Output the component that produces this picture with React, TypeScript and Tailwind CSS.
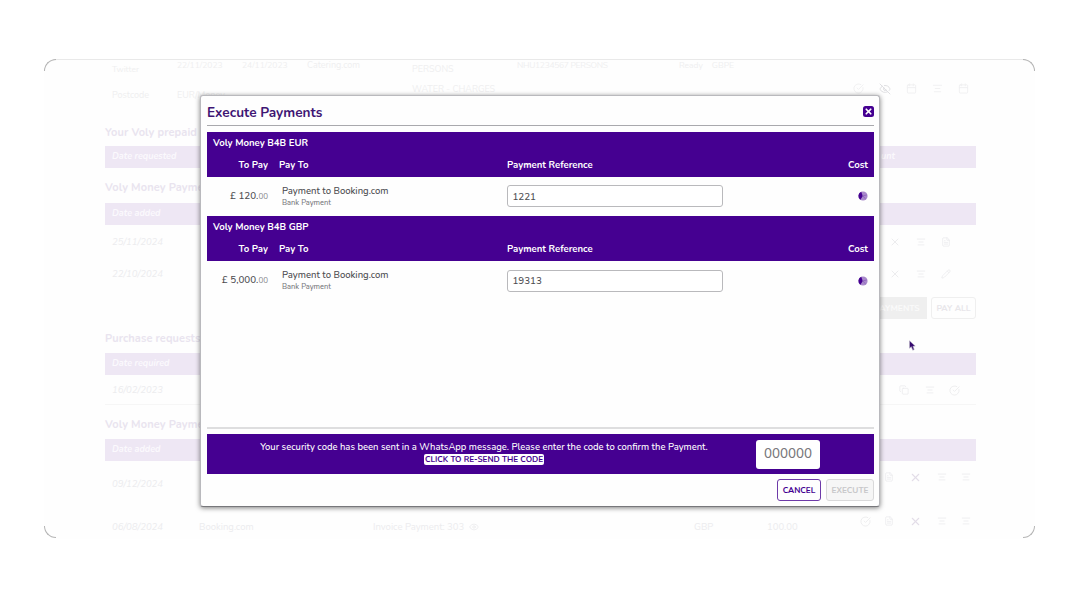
import type { ReactNode } from "react";
import { AlignCenter, Calendar, CheckCircle, Copy, Eye, EyeOff, FileText, Pencil, X } from "lucide-react";

interface Payment {
  account: string;
  whole: string;
  cents: string;
  payee: string;
  method: string;
  reference: string;
}

const payments: Payment[] = [
  {
    account: "Voly Money B4B EUR",
    whole: "£ 120.",
    cents: "00",
    payee: "Payment to Booking.com",
    method: "Bank Payment",
    reference: "1221",
  },
  {
    account: "Voly Money B4B GBP",
    whole: "£ 5,000.",
    cents: "00",
    payee: "Payment to Booking.com",
    method: "Bank Payment",
    reference: "19313",
  },
];

// ─── Page behind the dialog ───────────────────────────────────────────────────
const PageHeading = ({ children }: { children: ReactNode }) => (
  <h2 className="h-[14px] whitespace-nowrap text-[11px] font-bold leading-[14px] tracking-[0.1px] text-[#e9e4ef]">{children}</h2>
);

const PageBar = ({ label, end }: { label: string; end?: string }) => (
  <div className="flex h-[22px] items-center justify-between bg-[#eee7f4] pl-[7px] text-[9px] font-bold italic text-[#fbf9fd]">
    <span>{label}</span>
    {end && <span className="mr-[81px]">{end}</span>}
  </div>
);

const PageRow = ({ date, children }: { date: string; children?: ReactNode }) => (
  <div className="flex h-[14px] items-center justify-between pl-[7px] text-[9.5px] italic text-[#ececee]">
    <span>{date}</span>
    <div className="flex items-center">{children}</div>
  </div>
);

const BackgroundPage = () => (
  <div className="ml-[61px] w-[871px] text-[#efeff0]">
    <div className="flex h-[23px] text-[8.5px] leading-[10px]">
      <span className="w-[72px] pl-[7px] pt-[4px]">Twitter</span>
      <span className="w-[65px]">22/11/2023</span>
      <span className="w-[65px]">24/11/2023</span>
      <span className="w-[105px] text-[9px]">Catering.com</span>
      <span className="w-[105px] pt-[4px] text-[9px]">PERSONS</span>
      <span className="w-[162px] tracking-[-0.3px]">NHU1234567 PERSONS</span>
      <span>Ready &nbsp; &nbsp;GBPE</span>
    </div>
    <div className="flex h-[42.5px] justify-between text-[9px] leading-[12px]">
      <div className="flex">
        <span className="w-[72px] pl-[7px] pt-[6px]">Postcode</span>
        <span className="w-[235px] pt-[6px]">EUR/Money</span>
        <span>WATER - CHARGES</span>
      </div>
      <div className="mr-[7px] flex gap-[15px] text-[#f0f0f1]">
        <CheckCircle size={11} />
        <EyeOff size={12} className="text-[#dfdfe2]" />
        <Calendar size={11} />
        <AlignCenter size={11} />
        <Calendar size={11} />
      </div>
    </div>
    <PageHeading>Your Voly prepaid cards</PageHeading>
    <div className="h-[6.5px]" />
    <PageBar label="Date requested" end="unt" />
    <div className="h-[13px]" />
    <PageHeading>Voly Money Payments</PageHeading>
    <div className="h-[8px]" />
    <PageBar label="Date added" />
    <div className="h-[10px]" />
    <PageRow date="25/11/2024">
      <X size={12} className="mr-[15px]" />
      <AlignCenter size={10} className="mr-[15px]" />
      <FileText size={10} className="mr-[25px]" />
    </PageRow>
    <div className="h-[18px]" />
    <PageRow date="22/10/2024">
      <X size={12} className="mr-[15px]" />
      <AlignCenter size={10} className="mr-[15px]" />
      <Pencil size={10} className="mr-[25px]" />
    </PageRow>
    <div className="h-[16px]" />
    <div className="flex justify-end gap-[4px] text-[8.5px] font-bold">
      <span className="flex h-[22px] w-[60px] items-center justify-center bg-[#efefef] text-[#fafafa]">PAYMENTS</span>
      <span className="flex h-[22px] w-[45px] items-center justify-center rounded-[3px] border border-[#efefef] text-[#e8e6ea]">PAY ALL</span>
    </div>
    <div className="h-[13px]" />
    <PageHeading>Purchase requests</PageHeading>
    <div className="h-[7px]" />
    <PageBar label="Date required" />
    <div className="h-[8px]" />
    <PageRow date="16/02/2023">
      <Copy size={10} className="mr-[16px]" />
      <AlignCenter size={10} className="mr-[14px]" />
      <CheckCircle size={11} className="mr-[16px]" />
    </PageRow>
    <div className="mb-[13px] h-[8px] border-b border-[#f6f6f6]" />
    <PageHeading>Voly Money Payments</PageHeading>
    <div className="h-[7px]" />
    <PageBar label="Date added" />
    <div className="h-[16px]" />
    <PageRow date="09/12/2024">
      <div className="mb-[14px] flex items-center">
        <FileText size={10} className="mr-[15px]" />
        <X size={13} className="mr-[15px] text-[#e3dde8]" />
        <AlignCenter size={10} className="mr-[14px]" />
        <AlignCenter size={10} className="mr-[5px]" />
      </div>
    </PageRow>
    <div className="h-[29px]" />
    <div className="flex h-[14px] items-center justify-between pl-[7px] text-[9.5px] text-[#ececee]">
      <div className="flex">
        <span className="w-[87px] italic">06/08/2024</span>
        <span className="w-[174px]">Booking.com</span>
        <span className="flex w-[321px] items-center gap-[5px]">
          Invoice Payment: 303 <Eye size={10} />
        </span>
        <span className="w-[73px]">GBP</span>
        <span>100.00</span>
      </div>
      <div className="mb-[12px] flex items-center">
        <CheckCircle size={11} className="mr-[13px]" />
        <FileText size={10} className="mr-[15px]" />
        <X size={13} className="mr-[15px] text-[#e3dde8]" />
        <AlignCenter size={10} className="mr-[14px]" />
        <AlignCenter size={10} className="mr-[5px]" />
      </div>
    </div>
  </div>
);

// ─── Dialog ───────────────────────────────────────────────────────────────────
const Spinner = () => (
  <svg width="10" height="10" viewBox="0 0 10 10">
    <circle cx="5" cy="5" r="4.6" fill="#a98acb" />
    <path d="M4.8 5 L2.4 8.8 A4.6 4.6 0 0 1 3.2 0.8 Z" fill="#450091" />
    <path d="M4 5 L8.8 4 M5 5 L7.5 8" stroke="#8a5dba" strokeWidth="0.7" />
  </svg>
);

const PaymentSection = ({ payment }: { payment: Payment }) => (
  <section>
    <div className="h-[45px] bg-[#450091] text-[9.55px] font-bold text-white">
      <div className="h-[22px] pl-[6px] leading-[22px]">{payment.account}</div>
      <div className="grid h-[23px] grid-cols-[61px_239px_1fr_auto] leading-[22.5px]">
        <span className="text-right">To Pay</span>
        <span className="pl-[11px]">Pay To</span>
        <span>Payment Reference</span>
        <span className="pr-[6px]">Cost</span>
      </div>
    </div>
    <div className="grid h-[39.5px] grid-cols-[61px_239px_1fr_auto] items-center font-medium text-[#4c4c50]">
      <span className="whitespace-nowrap text-right text-[9.8px]">
        {payment.whole}
        <span className="text-[8px] font-normal text-[#8a8a8e]">{payment.cents}</span>
      </span>
      <div className="pl-[14px]">
        <p className="text-[9.5px] leading-[12px]">{payment.payee}</p>
        <p className="text-[7.5px] leading-[11px] text-[#77777b]">{payment.method}</p>
      </div>
      <input
        readOnly
        value={payment.reference}
        className="h-[22px] w-[216px] rounded-[3px] border border-[#b9b9bc] bg-white px-[4.5px] text-[9.8px] outline-none"
      />
      <span className="pr-[6px]">
        <Spinner />
      </span>
    </div>
  </section>
);

const ExecuteDialog = () => (
  <div className="absolute left-[200.4px] top-[94.6px] flex h-[412.4px] w-[679.6px] flex-col rounded-[3px] border border-[#b9b9bd] border-b-[#77777b] bg-[#fefefe] pl-[5.6px] pr-[5px] shadow-[0_1px_5px_rgba(0,0,0,0.5)]">
    <header className="flex h-[30.4px] items-center justify-between border-b border-[#a9a9ad] pt-[5px]">
      <h1 className="text-[13.6px] font-bold text-[#3f1674]">Execute Payments</h1>
      <button className="mb-[3px] flex h-[11px] w-[11px] items-center justify-center rounded-[2.5px] bg-[#450091] text-white">
        <X size={9} strokeWidth={4.5} />
      </button>
    </header>
    <div className="flex-1 pt-[5.6px]">
      {payments.map((payment) => (
        <PaymentSection key={payment.account} payment={payment} />
      ))}
    </div>
    <div className="mb-[4.5px] h-[2px] bg-[#dededf]" />
    <div className="flex h-[40.5px] bg-[#450091] text-white">
      <div className="flex w-[549px] flex-col items-center pl-[5px] pt-[6px]">
        <p className="mb-px whitespace-nowrap text-[9.45px] font-medium leading-[13px]">
          Your security code has been sent in a WhatsApp message. Please enter the code to confirm the Payment.
        </p>
        <button className="h-[11px] whitespace-nowrap rounded-[2px] bg-white px-px text-[8.15px] font-bold leading-[11px] text-[#450091]">
          CLICK TO RE-SEND THE CODE
        </button>
      </div>
      <div className="mt-[6px] flex h-[29px] w-[64px] items-center justify-center rounded-[3px] bg-white text-[13.4px] font-medium text-[#77777b]">
        000000
      </div>
    </div>
    <footer className="flex h-[31.5px] justify-end gap-[5px] pt-[5px] text-[8.2px] font-bold">
      <button className="h-[22px] w-[44px] rounded-[3px] border border-[#6d3aa8] pt-px text-[#450091]">CANCEL</button>
      <button className="h-[22px] w-[48px] rounded-[3px] border border-[#d9d9da] bg-[#f6f6f6] pt-px text-[#c7c7c9]">EXECUTE</button>
    </footer>
  </div>
);

const App = () => (
  <div className="relative h-[608px] w-[1080px] overflow-hidden bg-white pl-[44px] pt-[59px] font-['Nunito','Open_Sans',sans-serif]">
    <div className="h-[480px] w-[991px] overflow-hidden rounded-[13px] border-t border-[#e9e9e9] bg-[#fefefe]">
      <BackgroundPage />
    </div>

    {/* Rounded corner outlines */}
    <div className="absolute left-[44px] top-[59px] h-[12px] w-[12px] rounded-tl-[12px] border-l border-t border-[#b4b4b4]" />
    <div className="absolute left-[1023px] top-[59px] h-[12px] w-[12px] rounded-tr-[12px] border-r border-t border-[#b4b4b4]" />
    <div className="absolute left-[44px] top-[526px] h-[12px] w-[12px] rounded-bl-[12px] border-b border-l border-[#b4b4b4]" />
    <div className="absolute left-[1023px] top-[526px] h-[12px] w-[12px] rounded-br-[12px] border-b border-r border-[#b4b4b4]" />

    <ExecuteDialog />

    {/* Mouse pointer */}
    <svg className="absolute left-[909px] top-[340px]" width="7" height="11" viewBox="0 0 7 11">
      <path d="M0.5 0.8 L0.5 8.2 L2.3 6.7 L3.8 10.2 L5.2 9.5 L3.9 6.3 L6.2 6 Z" fill="#35096f" stroke="#b9b3c4" strokeWidth="0.6" />
    </svg>
  </div>
);

export default App;
